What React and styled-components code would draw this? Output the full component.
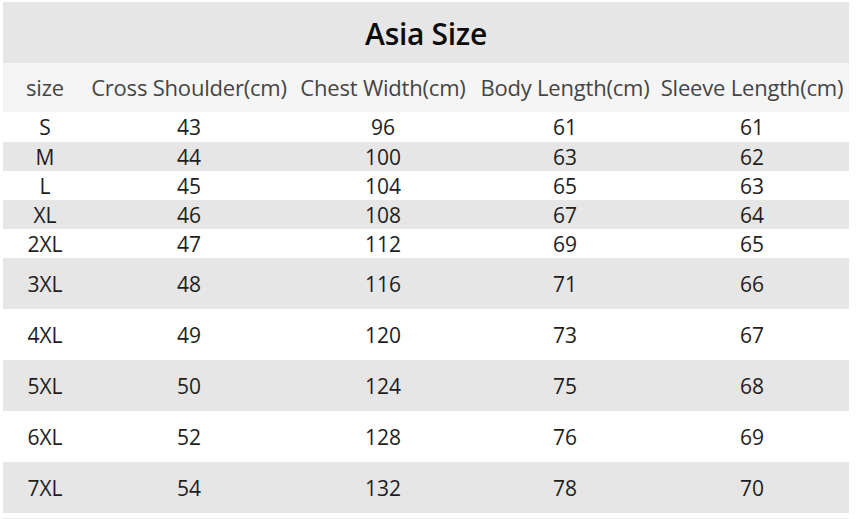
import React from 'react';
import styled, { createGlobalStyle } from 'styled-components';

const GlobalStyle = createGlobalStyle`
  html, body {
    margin: 0;
    padding: 0;
    background: #ffffff;
  }
  body {
    font-family: "Open Sans", "Noto Sans", sans-serif;
  }
`;

const Page = styled.div`
  width: 856px;
  height: 519px;
  overflow: hidden;
  padding: 2px 0 0 3px;
  box-sizing: border-box;
`;

const Table = styled.div`
  width: 846px;
  display: flex;
  flex-direction: column;
`;

const Title = styled.div`
  height: 61px;
  background: #e6e6e6;
  display: flex;
  align-items: center;
  justify-content: center;
  font-size: 30px;
  font-weight: 600;
  letter-spacing: -0.3px;
  color: #0c0c0c;
  padding-top: 1px;
  box-sizing: border-box;
`;

const Row = styled.div`
  display: grid;
  grid-template-columns: 84px 204px 184px 180px 194px;
  height: ${p => p.$h}px;
  background: ${p => p.$bg};
  align-items: center;
`;

const Cell = styled.div`
  text-align: center;
  white-space: nowrap;
  font-size: ${p => (p.$head ? '22px' : '21px')};
  color: ${p => (p.$head ? '#454545' : '#1e1e1e')};
  letter-spacing: ${p => (p.$head ? '-0.2px' : '0')};
  margin-top: ${p => (p.$head ? '-2px' : '0')};
`;

const BottomEdge = styled.div`
  margin-top: 5px;
  height: 2px;
  background: #ececec;
`;

const headers = ['size', 'Cross Shoulder(cm)', 'Chest Width(cm)', 'Body Length(cm)', 'Sleeve Length(cm)'];

const rows = [
  ['S', 43, 96, 61, 61],
  ['M', 44, 100, 63, 62],
  ['L', 45, 104, 65, 63],
  ['XL', 46, 108, 67, 64],
  ['2XL', 47, 112, 69, 65],
  ['3XL', 48, 116, 71, 66],
  ['4XL', 49, 120, 73, 67],
  ['5XL', 50, 124, 75, 68],
  ['6XL', 52, 128, 76, 69],
  ['7XL', 54, 132, 78, 70],
];

const smallHeights = [30, 29, 29, 29, 29];

const App = () => {
  return (
    <Page>
      <GlobalStyle />
      <Table>
        <Title>Asia Size</Title>
        <Row $h={49} $bg="#f5f5f5">
          {headers.map(h => (
            <Cell key={h} $head>{h}</Cell>
          ))}
        </Row>
        {rows.map((r, i) => (
          <Row
            key={r[0]}
            $h={i < 5 ? smallHeights[i] : 51}
            $bg={i % 2 === 1 ? '#e6e6e6' : '#ffffff'}
          >
            {r.map((v, j) => (
              <Cell key={j}>{v}</Cell>
            ))}
          </Row>
        ))}
        <BottomEdge />
      </Table>
    </Page>
  );
};

export default App;
